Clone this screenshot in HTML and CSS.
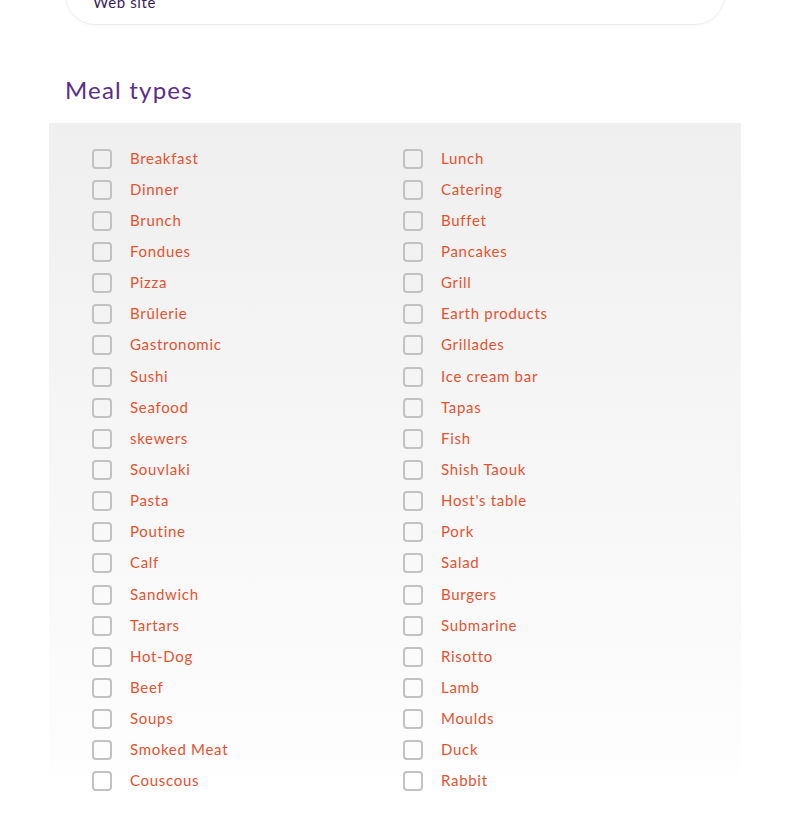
FILE: index.html
```html
<!DOCTYPE html>
<html lang="en">
<head>
<meta charset="utf-8">
<title>Meal types</title>
<link rel="stylesheet" href="styles.css">
</head>
<body>
<div class="card"><span class="card-text">Web site</span></div>
<h2 class="title">Meal types</h2>
<div class="panel">
  <div class="grid">
    <label class="item"><span class="box"></span>Breakfast</label>
    <label class="item"><span class="box"></span>Lunch</label>
    <label class="item"><span class="box"></span>Dinner</label>
    <label class="item"><span class="box"></span>Catering</label>
    <label class="item"><span class="box"></span>Brunch</label>
    <label class="item"><span class="box"></span>Buffet</label>
    <label class="item"><span class="box"></span>Fondues</label>
    <label class="item"><span class="box"></span>Pancakes</label>
    <label class="item"><span class="box"></span>Pizza</label>
    <label class="item"><span class="box"></span>Grill</label>
    <label class="item"><span class="box"></span>Brûlerie</label>
    <label class="item"><span class="box"></span>Earth products</label>
    <label class="item"><span class="box"></span>Gastronomic</label>
    <label class="item"><span class="box"></span>Grillades</label>
    <label class="item"><span class="box"></span>Sushi</label>
    <label class="item"><span class="box"></span>Ice cream bar</label>
    <label class="item"><span class="box"></span>Seafood</label>
    <label class="item"><span class="box"></span>Tapas</label>
    <label class="item"><span class="box"></span>skewers</label>
    <label class="item"><span class="box"></span>Fish</label>
    <label class="item"><span class="box"></span>Souvlaki</label>
    <label class="item"><span class="box"></span>Shish Taouk</label>
    <label class="item"><span class="box"></span>Pasta</label>
    <label class="item"><span class="box"></span>Host's table</label>
    <label class="item"><span class="box"></span>Poutine</label>
    <label class="item"><span class="box"></span>Pork</label>
    <label class="item"><span class="box"></span>Calf</label>
    <label class="item"><span class="box"></span>Salad</label>
    <label class="item"><span class="box"></span>Sandwich</label>
    <label class="item"><span class="box"></span>Burgers</label>
    <label class="item"><span class="box"></span>Tartars</label>
    <label class="item"><span class="box"></span>Submarine</label>
    <label class="item"><span class="box"></span>Hot-Dog</label>
    <label class="item"><span class="box"></span>Risotto</label>
    <label class="item"><span class="box"></span>Beef</label>
    <label class="item"><span class="box"></span>Lamb</label>
    <label class="item"><span class="box"></span>Soups</label>
    <label class="item"><span class="box"></span>Moulds</label>
    <label class="item"><span class="box"></span>Smoked Meat</label>
    <label class="item"><span class="box"></span>Duck</label>
    <label class="item"><span class="box"></span>Couscous</label>
    <label class="item"><span class="box"></span>Rabbit</label>
  </div>
</div>
</body>
</html>
```
FILE: styles.css
```css
html, body {
  margin: 0;
  padding: 0;
  background: #fff;
  font-family: "Lato", "Open Sans", sans-serif;
}
body {
  width: 790px;
  height: 826px;
  overflow: hidden;
}
.card {
  margin: -39px 0 0 65px;
  width: 660px;
  height: 64px;
  border: 1px solid #ededed;
  border-radius: 0 0 30px 30px;
  box-shadow: 0 1px 3px rgba(0,0,0,0.03);
  box-sizing: border-box;
  padding: 30px 0 0 27px;
}
.card-text {
  color: #3b1f5c;
  font-size: 15px;
  line-height: 15px;
  letter-spacing: 0.6px;
}
.title {
  margin: 50px 0 0 65px;
  height: 48px;
  font-size: 24px;
  font-weight: 400;
  line-height: 30px;
  color: #5a2d8c;
  letter-spacing: 1.2px;
}
.panel {
  margin-left: 49px;
  width: 692px;
  height: 660px;
  background: linear-gradient(to bottom, #efefef 0%, #fdfdfd 96%, #fff 100%);
  box-sizing: border-box;
  padding: 20px 0 0 43px;
}
.grid {
  display: grid;
  grid-template-columns: 311px 311px;
  grid-auto-rows: 31.15px;
}
.item {
  display: flex;
  align-items: center;
  font-size: 15px;
  color: #e5522f;
  letter-spacing: 0.7px;
  padding-bottom: 2px;
}
.box {
  width: 20px;
  height: 20px;
  box-sizing: border-box;
  border: 2px solid #c2c2c2;
  border-radius: 4px;
  margin-right: 18px;
  margin-top: 2px;
  flex: none;
}
```
